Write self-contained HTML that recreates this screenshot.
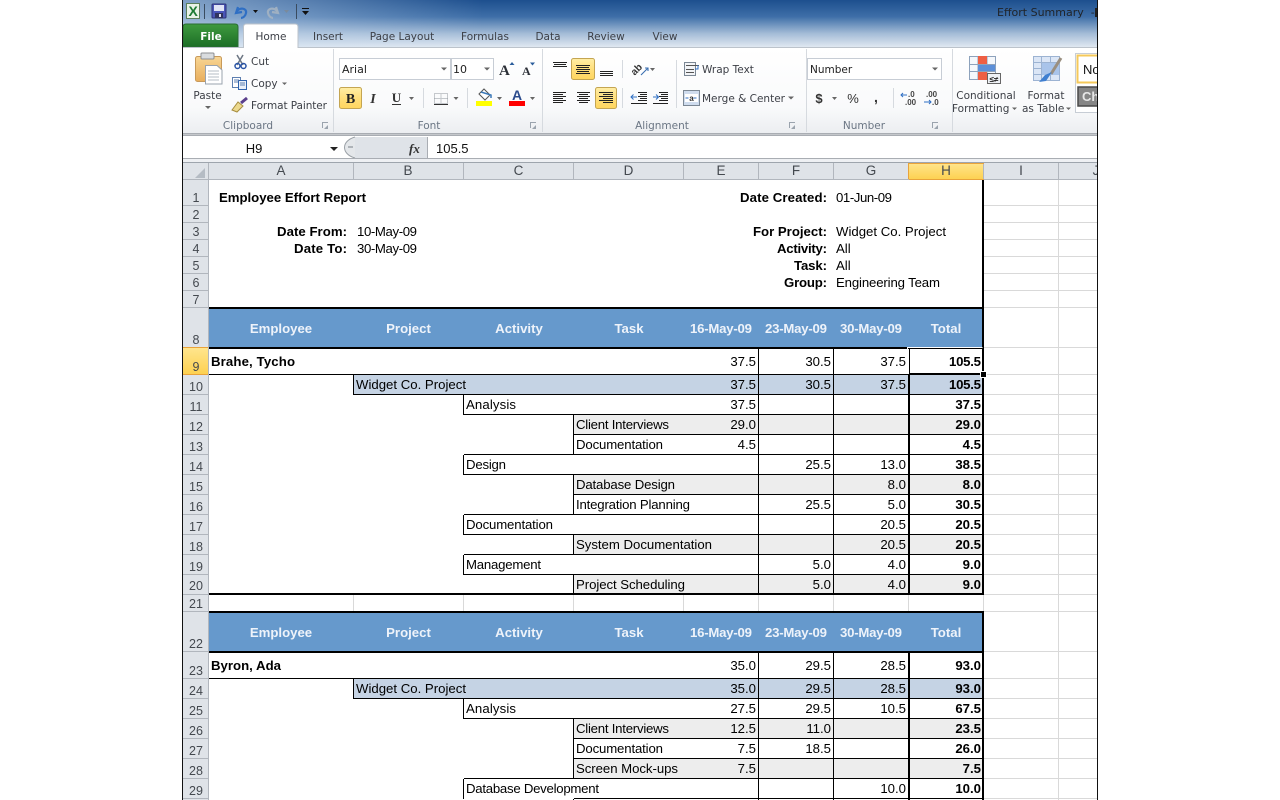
<!DOCTYPE html>
<html><head><meta charset="utf-8"><title>Effort Summary</title>
<style>
html,body{margin:0;padding:0;background:#fff;width:1280px;height:800px;overflow:hidden}
svg{display:block;position:absolute;left:0;top:0}
text{font-family:"Liberation Sans",Arial,sans-serif;white-space:pre}
.u{font-family:"DejaVu Sans",sans-serif;font-size:10.5px;fill:#3c3f46}
.g{font-family:"DejaVu Sans",sans-serif;font-size:10.5px;fill:#6b7684;text-anchor:middle}
.c{font-size:13.2px;fill:#000}
.b{font-size:13.2px;fill:#000;font-weight:bold}
.r{text-anchor:end}
.w{font-size:13.2px;fill:#eef3fa;font-weight:bold;text-anchor:middle}
.h{font-size:12.5px;fill:#44494f;text-anchor:middle}
.k{font-size:13.5px;fill:#44494f;text-anchor:middle}
.ln{fill:none;stroke:#000;stroke-width:1;shape-rendering:crispEdges}
.th{fill:none;stroke:#000;stroke-width:2;shape-rendering:crispEdges}
.gr{fill:none;stroke:#d9d9d9;stroke-width:1;shape-rendering:crispEdges}
.hs{fill:none;stroke:#b1b6bd;stroke-width:1;shape-rendering:crispEdges}
.ic{fill:none;stroke:#222;stroke-width:1;shape-rendering:crispEdges}
.ar{fill:#666}
</style></head><body>
<svg width="1280" height="800" viewBox="0 0 1280 800" xmlns="http://www.w3.org/2000/svg">
<defs>
<linearGradient id="tb" x1="0" y1="0" x2="0" y2="1"><stop offset="0" stop-color="#1d4f8e"/><stop offset=".35" stop-color="#3f6fa8"/><stop offset=".7" stop-color="#a4bcd7"/><stop offset="1" stop-color="#e4ebf3"/></linearGradient>
<linearGradient id="tl" x1="0" y1="0" x2="1" y2="0"><stop offset="0" stop-color="#cfe0f2" stop-opacity=".55"/><stop offset="1" stop-color="#cfe0f2" stop-opacity="0"/></linearGradient>
<linearGradient id="rb" x1="0" y1="0" x2="0" y2="1"><stop offset="0" stop-color="#fff"/><stop offset=".7" stop-color="#f9fafb"/><stop offset="1" stop-color="#eceef1"/></linearGradient>
<linearGradient id="gf" x1="0" y1="0" x2="0" y2="1"><stop offset="0" stop-color="#3f9a3f"/><stop offset="1" stop-color="#1c6e26"/></linearGradient>
<linearGradient id="yb" x1="0" y1="0" x2="0" y2="1"><stop offset="0" stop-color="#ffeea6"/><stop offset=".5" stop-color="#ffdf7c"/><stop offset="1" stop-color="#ffd65e"/></linearGradient>
<linearGradient id="ch" x1="0" y1="0" x2="0" y2="1"><stop offset="0" stop-color="#ffe58d"/><stop offset="1" stop-color="#fdd04e"/></linearGradient>
<linearGradient id="cp" x1="0" y1="0" x2="0" y2="1"><stop offset="0" stop-color="#f8d694"/><stop offset="1" stop-color="#e9ae5c"/></linearGradient>
</defs>

<!-- window frame background -->
<rect x="183" y="0" width="914" height="48" fill="url(#tb)"/>
<rect x="183" y="0" width="300" height="48" fill="url(#tl)"/>
<text class="u" x="997" y="16" style="fill:#1f2328;font-size:11px">Effort Summary  -</text>
<rect x="1095" y="8" width="2" height="9" fill="#222"/>

<!-- QAT -->
<rect x="186.500" y="3.500" width="13" height="15" fill="#e9f2e6" stroke="#5b7f5b"/>
<text x="188.500" y="16" style="font-size:14px;font-weight:bold;fill:#1e7b34">X</text>
<path d="M204.500 4V19M296.500 4V19" stroke="#3a4c60" fill="none"/>
<rect x="212" y="4" width="14" height="14" fill="#4a56b8" stroke="#2d3277" rx="1"/>
<rect x="214" y="5" width="10" height="6" fill="#dfe4f5"/>
<rect x="215" y="13" width="8" height="5" fill="#30345e"/><rect x="219" y="14" width="2" height="3" fill="#dde"/>
<path d="M238 7 L236 13 L242 12 M236.500 11.500 C240 7 247 8 246 13 C245.500 16 243 18 241 18" fill="none" stroke="#2f6fc4" stroke-width="2.200"/>
<path d="M253 10h5l-2.500 3z" fill="#111"/>
<path d="M276 7 L278 13 L272 12 M277.500 11.500 C274 7 267 8 268 13 C268.500 16 271 18 273 18" fill="none" stroke="#9fb0c2" stroke-width="2.200"/>
<path d="M284 10h5l-2.500 3z" fill="#7a8a9c"/>
<path d="M302 8h7v1h-7zM302 11h7l-3.500 4z" fill="#111"/>

<!-- Tabs -->
<path d="M183 47V27q0-3 3-3H235q3 0 3 3V47z" fill="url(#gf)" stroke="#2a6d33"/>
<text class="u" x="211" y="40" text-anchor="middle" style="fill:#fff;font-size:10.5px;font-weight:bold">File</text>
<path d="M243.500 48V27q0-3 3-3H295q3 0 3 3V48" fill="#fff" stroke="#bcc3cb"/>
<text class="u" x="271" y="40" text-anchor="middle">Home</text>
<text class="u" x="328" y="40" text-anchor="middle">Insert</text>
<text class="u" x="402" y="40" text-anchor="middle">Page Layout</text>
<text class="u" x="485" y="40" text-anchor="middle">Formulas</text>
<text class="u" x="548" y="40" text-anchor="middle">Data</text>
<text class="u" x="606" y="40" text-anchor="middle">Review</text>
<text class="u" x="665" y="40" text-anchor="middle">View</text>

<!-- Ribbon -->
<rect x="183" y="48" width="914" height="85" fill="url(#rb)"/>
<path d="M183 47.500H243M298 47.500H1097" stroke="#bcc3cb" fill="none"/>
<rect x="183" y="133" width="914" height="3" fill="#a9adb3"/>
<rect x="183" y="134" width="914" height="1" fill="#c4c7cb"/>
<path d="M333.500 49V132M542.500 49V132M806.500 49V132M952.500 49V132" stroke="#d6dadf" fill="none"/>

<text class="g" x="248" y="129">Clipboard</text>
<text class="g" x="429" y="129">Font</text>
<text class="g" x="662" y="129">Alignment</text>
<text class="g" x="864" y="129">Number</text>
<path d="M322.500 128V122.500H328M530.500 128V122.500H536M789.500 128V122.500H795M932.500 128V122.500H938" stroke="#9aa3ad" fill="none"/>
<path d="M328 125v4h-4zM536 125v4h-4zM795 125v4h-4zM938 125v4h-4z" fill="#9aa3ad"/>

<!-- Clipboard -->
<rect x="195.500" y="56.500" width="26" height="25" rx="2" fill="url(#cp)" stroke="#c89a5a"/>
<rect x="201" y="53" width="13" height="6" rx="1" fill="#d9dcdf" stroke="#8d8f93"/>
<path d="M205.500 65.500H217L222 70V84H205.500z" fill="#fff" stroke="#9aa3ad"/>
<path d="M208 71H219M208 74H219M208 77H219M208 80H219" stroke="#b5bcc6" fill="none"/>
<text class="u" x="207.500" y="99" text-anchor="middle">Paste</text>
<path d="M205 106h6l-3 3z" class="ar"/>
<path d="M237 55L243 65M243 55L237 65" stroke="#6c7683" stroke-width="1.500" fill="none"/>
<circle cx="237.500" cy="66" r="2.500" fill="none" stroke="#2b55a6" stroke-width="1.500"/>
<circle cx="243.500" cy="66" r="2.500" fill="none" stroke="#2b55a6" stroke-width="1.500"/>
<text class="u" x="251" y="65">Cut</text>
<rect x="232.500" y="77.500" width="8" height="10" fill="#fff" stroke="#5c7fb0"/>
<rect x="238.500" y="80.500" width="8" height="9" fill="#eaf1fa" stroke="#2f63ad"/>
<path d="M234 80h5M234 82h4M240 83h5M240 85h5" stroke="#5c7fb0" fill="none"/>
<text class="u" x="251" y="87">Copy</text>
<path d="M282 82.500h5l-2.500 2.500z" class="ar"/>
<path d="M232 110L238 102L243 106L237 112z" fill="#ecd98e" stroke="#a68c3e"/>
<path d="M241 103L247 98" stroke="#5a3f8c" stroke-width="3" fill="none"/>
<text class="u" x="251" y="109" textLength="76">Format Painter</text>

<!-- Font -->
<rect x="339.500" y="58.500" width="111" height="21" fill="#fff" stroke="#c7cdd5"/>
<rect x="451.500" y="58.500" width="42" height="21" fill="#fff" stroke="#c7cdd5"/>
<text x="342" y="73" style="font-size:11px;font-family:'DejaVu Sans',sans-serif;fill:#222">Arial</text>
<text x="453" y="73" style="font-size:11px;font-family:'DejaVu Sans',sans-serif;fill:#222">10</text>
<path d="M441 67.500h6l-3 3zM484 67.500h6l-3 3z" class="ar"/>
<text x="499" y="75" style="font-family:'Liberation Serif',serif;font-size:15px;font-weight:bold;fill:#2b2f36">A</text>
<path d="M509.500 65h5l-2.500-3z" fill="#2b5d9c"/>
<text x="522" y="75" style="font-family:'Liberation Serif',serif;font-size:12px;font-weight:bold;fill:#2b2f36">A</text>
<path d="M530 62.500h5l-2.500 3z" fill="#2b5d9c"/>
<rect x="339.500" y="87.500" width="22" height="21" rx="2" fill="url(#yb)" stroke="#c4a552"/>
<text x="350.500" y="103" text-anchor="middle" style="font-family:'Liberation Serif',serif;font-size:14px;font-weight:bold;fill:#222">B</text>
<text x="373" y="103" text-anchor="middle" style="font-family:'Liberation Serif',serif;font-size:14px;font-style:italic;font-weight:bold;fill:#333">I</text>
<text x="396.500" y="102" text-anchor="middle" style="font-family:'Liberation Serif',serif;font-size:13px;font-weight:bold;fill:#333">U</text>
<rect x="392" y="104" width="9" height="1" fill="#333"/>
<path d="M409 97h5l-2.500 3zM453.500 97h5l-2.500 3zM497 97h5l-2.500 3zM530 97h5l-2.500 3z" class="ar"/>
<path d="M423.500 88V108M467.500 88V108" stroke="#d6dadf" fill="none"/>
<path d="M434.500 93.500h13v10h-13zM441 93.500v10M434.500 98.500h13" stroke="#8f959c" stroke-dasharray="1 1" fill="none"/>
<rect x="434" y="104" width="14" height="1" fill="#333"/>
<path d="M479 94L484 89L490 95L485 100z" fill="#fff" stroke="#555"/>
<path d="M481 92L491 95L491 98" stroke="#3b78b8" stroke-width="1.500" fill="none"/>
<rect x="476" y="101" width="16" height="5" fill="#ffff00"/>
<text x="517" y="100" text-anchor="middle" style="font-size:14px;font-weight:bold;fill:#2a4a8c">A</text>
<rect x="509" y="101" width="16" height="5" fill="#ff0000"/>

<!-- Alignment -->
<rect x="571.500" y="58.500" width="23" height="21" rx="2" fill="url(#yb)" stroke="#c4a552"/>
<rect x="595.500" y="87.500" width="21" height="21" rx="2" fill="url(#yb)" stroke="#c4a552"/>
<path class="ic" d="M553 62.500H567M554 64.500H566M553 66.500H567M576 65.500H590M577 67.500H589M576 69.500H590M577 71.500H589M576 73.500H590M600 71.500H613M600 73.500H613M600 75.500H613"/>
<path class="ic" d="M553 92.500H566M553 94.500H563M553 96.500H566M553 98.500H563M553 100.500H566M553 102.500H563M577 92.500H590M579 94.500H588M577 96.500H590M579 98.500H588M577 100.500H590M579 102.500H588M599 92.500H613M603 94.500H613M599 96.500H613M603 98.500H613M599 100.500H613M603 102.500H613"/>
<path d="M622.500 60V78M622.500 88V108M676.500 60V108" stroke="#d6dadf" fill="none"/>
<text transform="rotate(-45 636 73)" x="633" y="74" style="font-size:10px;font-weight:bold;fill:#333">ab</text>
<path d="M641 75L648 68M645 68h3v3" stroke="#3a6fb0" stroke-width="1.100" fill="none"/>
<path d="M650 68h5l-2.500 3z" class="ar"/>
<path class="ic" d="M638 92.500H647M640 94.500H647M638 96.500H647M640 98.500H647M638 100.500H647M631 103.500H647M659 92.500H668M661 94.500H668M659 96.500H668M661 98.500H668M659 100.500H668M653 103.500H668"/>
<path d="M637 97h-6M633.500 94.500l-2.500 2.500 2.500 2.500M653 97h5M656 94.500l2.500 2.500-2.500 2.500" stroke="#2f6fc4" fill="none"/>
<rect x="684.500" y="62.500" width="11" height="13" fill="#f2f4f7" stroke="#7b8794"/>
<path d="M686 65.500H699M686 69.500H694M686 72.500H694" stroke="#555" fill="none"/>
<path d="M698 65v4h-3" stroke="#2f6fc4" fill="none"/>
<text class="u" x="702" y="73">Wrap Text</text>
<rect x="683.500" y="90.500" width="16" height="15" fill="#cfdcee" stroke="#7b8794"/>
<rect x="685" y="94" width="13" height="8" fill="#fff"/>
<text x="691.500" y="101" text-anchor="middle" style="font-size:8px;font-weight:bold;fill:#333">a</text>
<path d="M685.500 98h3M696.500 98h-3" stroke="#2f6fc4" fill="none"/>
<text class="u" x="702" y="102">Merge &amp; Center</text>
<path d="M788 96.500h6l-3 3z" class="ar"/>

<!-- Number -->
<rect x="807.500" y="58.500" width="134" height="21" fill="#fff" stroke="#c7cdd5"/>
<text x="810" y="73" style="font-size:10.5px;font-family:'DejaVu Sans',sans-serif;fill:#222">Number</text>
<path d="M932 67.500h6l-3 3z" class="ar"/>
<text x="819" y="103" text-anchor="middle" style="font-size:13px;font-weight:bold;fill:#333">$</text>
<path d="M832 97h5l-2.500 3z" class="ar"/>
<text x="853" y="103" text-anchor="middle" style="font-size:13px;fill:#333">%</text>
<text x="876" y="102" text-anchor="middle" style="font-size:14px;font-weight:bold;fill:#333">,</text>
<path d="M893.500 88V108" stroke="#d6dadf" fill="none"/>
<text x="908" y="97" style="font-size:8px;font-weight:bold;fill:#444">.0</text>
<text x="905" y="105" style="font-size:8px;font-weight:bold;fill:#444">.00</text>
<path d="M901 95h6M903 93l-2 2 2 2" stroke="#2f6fc4" fill="none"/>
<text x="926" y="97" style="font-size:8px;font-weight:bold;fill:#444">.00</text>
<text x="932" y="105" style="font-size:8px;font-weight:bold;fill:#444">.0</text>
<path d="M924 102h7M929 100l2 2-2 2" stroke="#2f6fc4" fill="none"/>

<!-- Conditional Formatting -->
<rect x="969.500" y="56.500" width="26" height="23" fill="#f4f7fb" stroke="#8da2bc"/>
<path d="M969 64.500H996M969 71.500H996M978 56V80M987 56V80" stroke="#8da2bc" fill="none"/>
<rect x="978" y="56" width="9" height="8" fill="#ee5f44"/>
<rect x="978" y="65" width="9" height="6" fill="#ee5f44"/>
<rect x="978" y="65" width="17" height="6" fill="#5c8fd8"/>
<rect x="978" y="72" width="9" height="8" fill="#ee5f44"/>
<rect x="987.500" y="73.500" width="13" height="10" fill="#eef1f5" stroke="#666"/>
<text x="994" y="82" text-anchor="middle" style="font-size:8px;font-weight:bold;fill:#222">≤≠</text>
<text class="u" x="986" y="99" text-anchor="middle">Conditional</text>
<text class="u" x="952" y="112">Formatting</text>
<path d="M1012 107.500h5l-2.500 2.500z" class="ar"/>
<!-- Format as table -->
<rect x="1033.500" y="56.500" width="26" height="24" fill="#dbe6f6" stroke="#9cb3d2"/>
<path d="M1033 62.500H1060M1033 68.500H1060M1033 74.500H1060M1041.500 56V81M1050.500 56V81" stroke="#9cb3d2" fill="none"/>
<rect x="1042" y="63" width="17" height="12" fill="#a9c4ea"/>
<path d="M1061 58L1051 74" stroke="#9a8f80" stroke-width="3" fill="none"/>
<path d="M1052 72L1046 81L1039 82L1045 75z" fill="#3f7fd0"/>
<text class="u" x="1046" y="99" text-anchor="middle">Format</text>
<text class="u" x="1022" y="112">as Table</text>
<path d="M1066 107.500h5l-2.500 2.500z" class="ar"/>
<!-- Styles -->
<rect x="1075.500" y="53.500" width="24" height="59" fill="#fff" stroke="#c7cdd5"/>
<rect x="1077.500" y="55.500" width="24" height="27" fill="#fff" stroke="#f5c95a" stroke-width="2"/>
<text x="1083" y="74" style="font-size:13px;fill:#111">No</text>
<rect x="1078" y="87" width="22" height="19" fill="#868686" stroke="#4a4a4a" stroke-width="1.500"/>
<text x="1082" y="101" style="font-size:13px;font-weight:bold;fill:#e6e6e6">Ch</text>

<!-- Formula bar -->
<rect x="183" y="136" width="914" height="22" fill="#fff"/>
<rect x="345" y="137" width="82" height="21" fill="#dfe3e8"/>
<path d="M355 137C341 141 341 154 355 158H345V137z" fill="#fff"/>
<path d="M355 137C341 141 341 154 355 158" fill="#e4e7ea" stroke="#9aa0a6"/>
<rect x="348" y="146" width="5" height="2" fill="#aeb3b8"/>
<path d="M427.500 137V158" stroke="#a9adb3" fill="none"/>
<text x="254" y="153" text-anchor="middle" style="font-size:13px;fill:#111">H9</text>
<path d="M330 147h8l-4 4z" fill="#222"/>
<text x="409" y="153" style="font-family:'Liberation Serif',serif;font-size:13px;font-style:italic;font-weight:bold;fill:#333">fx</text>
<text x="436" y="153" style="font-size:13px;fill:#111">105.5</text>
<rect x="183" y="158" width="914" height="1" fill="#a9adb3"/>
<rect x="183" y="159" width="914" height="4" fill="#eef0f3"/>

<!-- Sheet bg -->
<rect x="183" y="180" width="914" height="620" fill="#fff"/>
<!-- column header -->
<rect x="183" y="163" width="914" height="17" fill="#dfe3e8"/>
<rect x="183" y="162" width="914" height="1" fill="#9ea5ad"/>
<rect x="909" y="163" width="75" height="17" fill="url(#ch)"/>
<path d="M208.500 163V180M353.500 163V180M463.500 163V180M573.500 163V180M683.500 163V180M758.500 163V180M833.500 163V180M983.500 163V180M1058.500 163V180" class="hs"/>
<path d="M908.500 163V180M909 179.500H984M909 163.500H984" stroke="#e9a33a" fill="none" shape-rendering="crispEdges"/>
<path d="M183 179.500H909M984 179.500H1097" class="hs"/>
<path d="M205 168V178H195z" fill="#b5bcc4"/>
<text class="k" x="281" y="175">A</text><text class="k" x="408" y="175">B</text><text class="k" x="518.500" y="175">C</text><text class="k" x="628.500" y="175">D</text><text class="k" x="721" y="175">E</text><text class="k" x="796" y="175">F</text><text class="k" x="871" y="175">G</text><text class="k" x="946" y="175">H</text><text class="k" x="1021" y="175">I</text><text class="k" x="1096" y="175">J</text>

<!-- row header -->
<rect x="183" y="180" width="26" height="620" fill="#dfe3e8"/>
<rect x="183" y="348" width="26" height="27" fill="url(#ch)"/>
<path d="M183 347.500H209M183 374.500H209" stroke="#e9a33a" fill="none" shape-rendering="crispEdges"/>
<path class="hs" d="M183 205.500H209M183 222.500H209M183 239.500H209M183 256.500H209M183 273.500H209M183 290.500H209M183 307.500H209M183 394.500H209M183 414.500H209M183 434.500H209M183 454.500H209M183 474.500H209M183 494.500H209M183 514.500H209M183 534.500H209M183 554.500H209M183 574.500H209M183 594.500H209M183 611.500H209M183 651.500H209M183 678.500H209M183 698.500H209M183 718.500H209M183 738.500H209M183 758.500H209M183 778.500H209M183 798.500H209"/>
<path class="hs" d="M208.500 180V800"/>
<text class="h" x="196" y="202">1</text><text class="h" x="196" y="219">2</text><text class="h" x="196" y="236">3</text><text class="h" x="196" y="253">4</text><text class="h" x="196" y="270">5</text><text class="h" x="196" y="287">6</text><text class="h" x="196" y="304">7</text><text class="h" x="196" y="344">8</text><text class="h" x="196" y="371">9</text>
<text class="h" x="196" y="391">10</text><text class="h" x="196" y="411">11</text><text class="h" x="196" y="431">12</text><text class="h" x="196" y="451">13</text><text class="h" x="196" y="471">14</text><text class="h" x="196" y="491">15</text><text class="h" x="196" y="511">16</text><text class="h" x="196" y="531">17</text><text class="h" x="196" y="551">18</text><text class="h" x="196" y="571">19</text><text class="h" x="196" y="590">20</text><text class="h" x="196" y="608">21</text><text class="h" x="196" y="648">22</text><text class="h" x="196" y="675">23</text><text class="h" x="196" y="695">24</text><text class="h" x="196" y="715">25</text><text class="h" x="196" y="735">26</text><text class="h" x="196" y="755">27</text><text class="h" x="196" y="775">28</text><text class="h" x="196" y="795">29</text>

<!-- gridlines I/J & row 21 -->
<path class="gr" d="M984 205.500H1097M984 222.500H1097M984 239.500H1097M984 256.500H1097M984 273.500H1097M984 290.500H1097M984 307.500H1097M984 347.500H1097M984 374.500H1097M984 394.500H1097M984 414.500H1097M984 434.500H1097M984 454.500H1097M984 474.500H1097M984 494.500H1097M984 514.500H1097M984 534.500H1097M984 554.500H1097M984 574.500H1097M984 594.500H1097M984 611.500H1097M984 651.500H1097M984 678.500H1097M984 698.500H1097M984 718.500H1097M984 738.500H1097M984 758.500H1097M984 778.500H1097M984 798.500H1097M1058.500 180V800"/>
<path class="gr" d="M353.500 595V611M463.500 595V611M573.500 595V611M683.500 595V611M758.500 595V611M833.500 595V611M908.500 595V611M983.500 595V611"/>

<!-- fills -->
<rect x="209" y="309" width="774" height="38" fill="#6699cc"/>
<rect x="209" y="613" width="774" height="38" fill="#6699cc"/>
<rect x="354" y="375" width="629" height="19" fill="#c5d3e4"/>
<rect x="354" y="679" width="629" height="19" fill="#c5d3e4"/>
<rect x="574" y="415" width="409" height="19" fill="#ededed"/>
<rect x="574" y="475" width="409" height="19" fill="#ededed"/>
<rect x="574" y="535" width="409" height="19" fill="#ededed"/>
<rect x="574" y="575" width="409" height="18" fill="#ededed"/>
<rect x="574" y="719" width="409" height="19" fill="#ededed"/>
<rect x="574" y="759" width="409" height="19" fill="#ededed"/>

<!-- borders -->
<path class="ln" d="M209 374.500H984M354 394.500H984M464 414.500H984M574 434.500H984M464 454.500H984M464 474.500H984M574 494.500H984M464 514.500H984M464 534.500H984M464 554.500H984M464 574.500H984"/>
<path class="ln" d="M209 678.500H984M354 698.500H984M464 718.500H984M574 738.500H984M574 758.500H984M464 778.500H984M574 798.500H984"/>
<path class="ln" d="M758.500 348V594M833.500 348V594M758.500 652V800M833.500 652V800"/>
<path class="ln" d="M353.500 375V395M463.500 395V415M463.500 455V475M463.500 515V535M463.500 555V575M573.500 415V455M573.500 475V515M573.500 535V555M573.500 575V594"/>
<path class="ln" d="M353.500 679V699M463.500 699V719M463.500 779V799M573.500 719V779M573.500 799V800"/>
<path class="th" d="M909 375V594M909 652V800M983 180V594M983 612V800"/>
<path class="th" d="M209 308H984M209 348H984M209 594H984M209 612H984M209 652H984"/>

<!-- selection -->
<path d="M907.500 347.500H982.500M907.500 347V374" stroke="#fff" fill="none" shape-rendering="crispEdges"/>
<rect x="909.500" y="348.500" width="73" height="25" fill="#fff" stroke="#000" shape-rendering="crispEdges"/>
<rect x="980" y="371" width="7" height="7" fill="#fff"/>
<rect x="981" y="372" width="5" height="5" fill="#000"/>

<!-- Report header text -->
<text class="b" x="219" y="202" textLength="147">Employee Effort Report</text>
<text class="b r" x="347" y="236" textLength="70">Date From:</text><text class="c" x="357" y="236" textLength="60">10-May-09</text>
<text class="b r" x="347" y="253" textLength="53">Date To:</text><text class="c" x="357" y="253" textLength="60">30-May-09</text>
<text class="b r" x="827" y="202" textLength="87">Date Created:</text><text class="c" x="836" y="202" textLength="56">01-Jun-09</text>
<text class="b r" x="827" y="236" textLength="74">For Project:</text><text class="c" x="836" y="236" textLength="110">Widget Co. Project</text>
<text class="b r" x="827" y="253" textLength="50">Activity:</text><text class="c" x="836" y="253">All</text>
<text class="b r" x="827" y="270" textLength="33">Task:</text><text class="c" x="836" y="270">All</text>
<text class="b r" x="827" y="287" textLength="43">Group:</text><text class="c" x="836" y="287" textLength="104">Engineering Team</text>

<!-- Table header 1 -->
<text class="w" x="281" y="333">Employee</text><text class="w" x="408.500" y="333">Project</text><text class="w" x="519" y="333">Activity</text><text class="w" x="629" y="333">Task</text><text class="w" x="721" y="333" textLength="62">16-May-09</text><text class="w" x="796" y="333" textLength="62">23-May-09</text><text class="w" x="871" y="333" textLength="62">30-May-09</text><text class="w" x="946" y="333">Total</text>

<!-- Block 1 -->
<text class="b" x="211" y="366" textLength="84">Brahe, Tycho</text>
<text class="c r" x="756" y="366">37.5</text><text class="c r" x="831" y="366">30.5</text><text class="c r" x="906" y="366">37.5</text><text class="b r" x="981" y="366" textLength="32">105.5</text>
<text class="c" x="356" y="389" textLength="110">Widget Co. Project</text>
<text class="c r" x="756" y="389">37.5</text><text class="c r" x="831" y="389">30.5</text><text class="c r" x="906" y="389">37.5</text><text class="b r" x="981" y="389" textLength="32">105.5</text>
<text class="c" x="466" y="409" textLength="50">Analysis</text><text class="c r" x="756" y="409">37.5</text><text class="b r" x="981" y="409">37.5</text>
<text class="c" x="576" y="429" textLength="93">Client Interviews</text><text class="c r" x="756" y="429">29.0</text><text class="b r" x="981" y="429">29.0</text>
<text class="c" x="576" y="449" textLength="87">Documentation</text><text class="c r" x="756" y="449">4.5</text><text class="b r" x="981" y="449">4.5</text>
<text class="c" x="466" y="469" textLength="40">Design</text><text class="c r" x="831" y="469">25.5</text><text class="c r" x="906" y="469">13.0</text><text class="b r" x="981" y="469">38.5</text>
<text class="c" x="576" y="489" textLength="99">Database Design</text><text class="c r" x="906" y="489">8.0</text><text class="b r" x="981" y="489">8.0</text>
<text class="c" x="576" y="509" textLength="114">Integration Planning</text><text class="c r" x="831" y="509">25.5</text><text class="c r" x="906" y="509">5.0</text><text class="b r" x="981" y="509">30.5</text>
<text class="c" x="466" y="529" textLength="87">Documentation</text><text class="c r" x="906" y="529">20.5</text><text class="b r" x="981" y="529">20.5</text>
<text class="c" x="576" y="549" textLength="136">System Documentation</text><text class="c r" x="906" y="549">20.5</text><text class="b r" x="981" y="549">20.5</text>
<text class="c" x="466" y="569" textLength="75">Management</text><text class="c r" x="831" y="569">5.0</text><text class="c r" x="906" y="569">4.0</text><text class="b r" x="981" y="569">9.0</text>
<text class="c" x="576" y="589" textLength="109">Project Scheduling</text><text class="c r" x="831" y="589">5.0</text><text class="c r" x="906" y="589">4.0</text><text class="b r" x="981" y="589">9.0</text>

<!-- Table header 2 -->
<text class="w" x="281" y="637">Employee</text><text class="w" x="408.500" y="637">Project</text><text class="w" x="519" y="637">Activity</text><text class="w" x="629" y="637">Task</text><text class="w" x="721" y="637" textLength="62">16-May-09</text><text class="w" x="796" y="637" textLength="62">23-May-09</text><text class="w" x="871" y="637" textLength="62">30-May-09</text><text class="w" x="946" y="637">Total</text>

<!-- Block 2 -->
<text class="b" x="211" y="670" textLength="70">Byron, Ada</text>
<text class="c r" x="756" y="670">35.0</text><text class="c r" x="831" y="670">29.5</text><text class="c r" x="906" y="670">28.5</text><text class="b r" x="981" y="670">93.0</text>
<text class="c" x="356" y="693" textLength="110">Widget Co. Project</text>
<text class="c r" x="756" y="693">35.0</text><text class="c r" x="831" y="693">29.5</text><text class="c r" x="906" y="693">28.5</text><text class="b r" x="981" y="693">93.0</text>
<text class="c" x="466" y="713" textLength="50">Analysis</text><text class="c r" x="756" y="713">27.5</text><text class="c r" x="831" y="713">29.5</text><text class="c r" x="906" y="713">10.5</text><text class="b r" x="981" y="713">67.5</text>
<text class="c" x="576" y="733" textLength="93">Client Interviews</text><text class="c r" x="756" y="733">12.5</text><text class="c r" x="831" y="733">11.0</text><text class="b r" x="981" y="733">23.5</text>
<text class="c" x="576" y="753" textLength="87">Documentation</text><text class="c r" x="756" y="753">7.5</text><text class="c r" x="831" y="753">18.5</text><text class="b r" x="981" y="753">26.0</text>
<text class="c" x="576" y="773" textLength="102">Screen Mock-ups</text><text class="c r" x="756" y="773">7.5</text><text class="b r" x="981" y="773">7.5</text>
<text class="c" x="466" y="793" textLength="133">Database Development</text><text class="c r" x="906" y="793">10.0</text><text class="b r" x="981" y="793">10.0</text>

<!-- outer frame / cropped sides -->
<rect x="182" y="0" width="1" height="800" fill="#111"/>
<rect x="1097" y="0" width="183" height="800" fill="#fff"/>
<rect x="1097" y="0" width="1" height="800" fill="#111"/>
</svg>
</body></html>
